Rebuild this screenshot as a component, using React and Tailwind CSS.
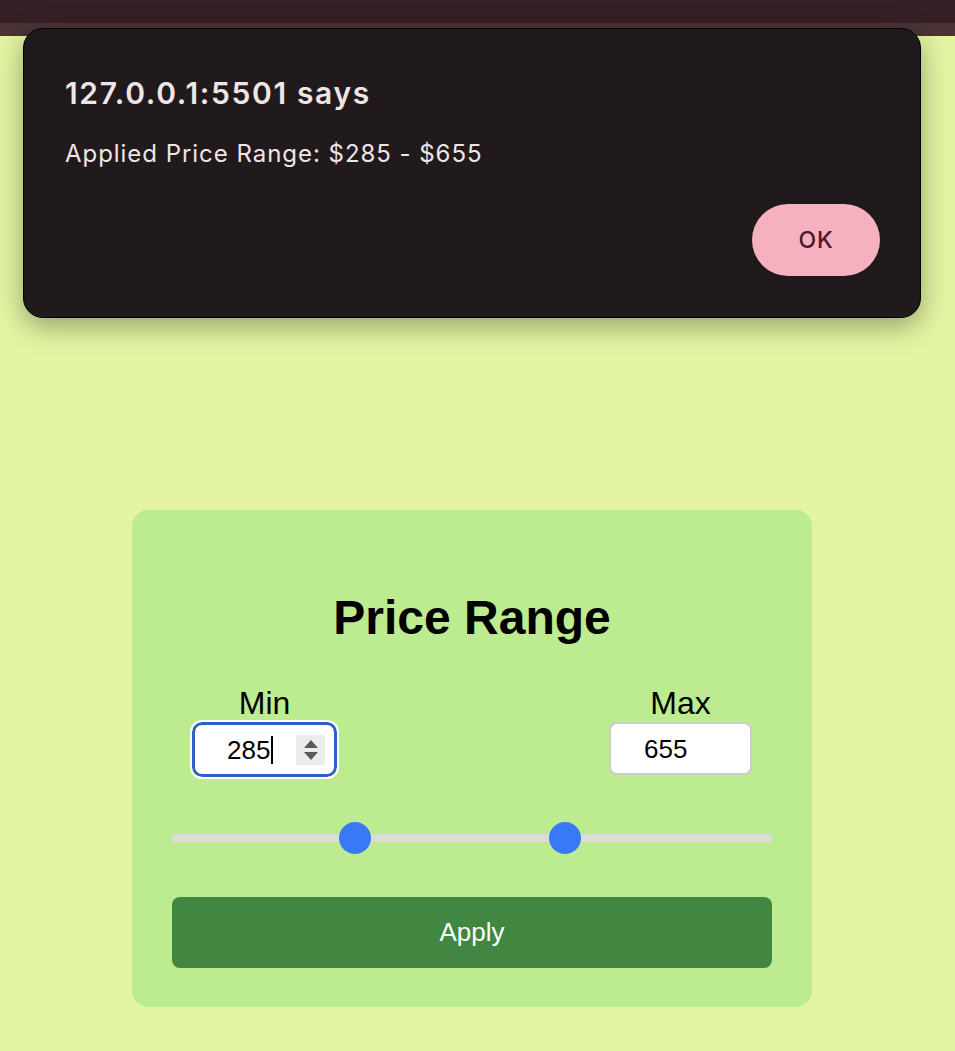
import { useState } from "react";

const MAX = 1000;

function Thumb({ value }) {
  // thumb centre follows a native range input: 16px half-thumb, 568px travel
  return (
    <div
      className="absolute top-0 w-[32px] h-[32px] rounded-full bg-[#3779f7]"
      style={{ left: `${5 + (value / MAX) * 568}px` }}
    />
  );
}

export default function App() {
  const [min] = useState(285);
  const [max] = useState(655);

  return (
    <div className="relative w-[955px] h-[1051px] overflow-hidden bg-[#e3f5a3] font-['Liberation_Sans',Arial,sans-serif]">
      {/* browser chrome strip */}
      <div className="h-[23px] bg-[#352026]" />
      <div className="h-[13px] bg-[#4b3338]" />

      {/* page */}
      <div className="flex justify-center pr-[11px] pt-[474px]">
        <div className="w-[680px] rounded-[16px] bg-[#bdec90] p-[40px] pb-[39px] text-black">
          <h2 className="my-[40px] text-center text-[48px] font-bold leading-[55px]">
            Price Range
          </h2>

          <div className="flex justify-between px-[20px]">
            <div className="flex flex-col items-center">
              <label className="text-[32px] leading-[37px]">Min</label>
              <div className="flex items-center w-[145px] h-[55px] rounded-[10px] bg-white border-[3px] border-[#2c5fc9] outline-2 outline-white">
                <span className="pl-[32px] text-[26px] leading-none">285</span>
                <span className="ml-[1px] w-[2px] h-[28px] bg-black" />
                <div className="ml-auto mr-[9px] flex flex-col items-center justify-center gap-[4px] w-[29px] h-[30px] bg-[#ececec]">
                  <svg width="14" height="8" viewBox="0 0 14 8">
                    <path d="M7 0 L14 8 L0 8 Z" fill="#5a5a5a" />
                  </svg>
                  <svg width="14" height="8" viewBox="0 0 14 8">
                    <path d="M0 0 L14 0 L7 8 Z" fill="#5a5a5a" />
                  </svg>
                </div>
              </div>
            </div>

            <div className="flex flex-col items-center">
              <label className="text-[32px] leading-[37px]">Max</label>
              <div className="flex items-center w-[143px] h-[53px] rounded-[8px] bg-white border-2 border-[#cccccc]">
                <span className="pl-[33px] text-[26px] leading-none">655</span>
              </div>
            </div>
          </div>

          <div className="relative mt-[45px] h-[32px]">
            <div className="absolute left-0 right-0 top-[12px] h-[8px] bg-[#dcdcdc]" />
            <Thumb value={min} />
            <Thumb value={max} />
          </div>

          <button className="mt-[43px] w-full h-[71px] rounded-[8px] bg-[#418742] text-white text-[26px]">
            Apply
          </button>
        </div>
      </div>

      {/* alert dialog */}
      <div className="absolute left-[23px] top-[28px] w-[898px] h-[290px] rounded-[20px] bg-[#211a1d] border border-black shadow-[0_8px_28px_rgba(0,0,0,0.35)] font-['Inter','Noto_Sans',sans-serif]">
        <div className="pl-[41px] pt-[46px]">
          <div className="text-[30px] font-semibold leading-[36px] tracking-[0.055em] text-[#efe5e7]">
            127.0.0.1:5501 says
          </div>
          <div className="mt-[28px] text-[24px] leading-[30px] tracking-[0.04em] text-[#efe5e7]">
            Applied Price Range: $285 - $655
          </div>
        </div>
        <div className="flex justify-end pr-[40px] pt-[35px]">
          <button className="w-[128px] h-[72px] rounded-full bg-[#f5b1c0] text-[23px] font-medium tracking-[0.03em] text-[#4a1a2a]">
            OK
          </button>
        </div>
      </div>
    </div>
  );
}
